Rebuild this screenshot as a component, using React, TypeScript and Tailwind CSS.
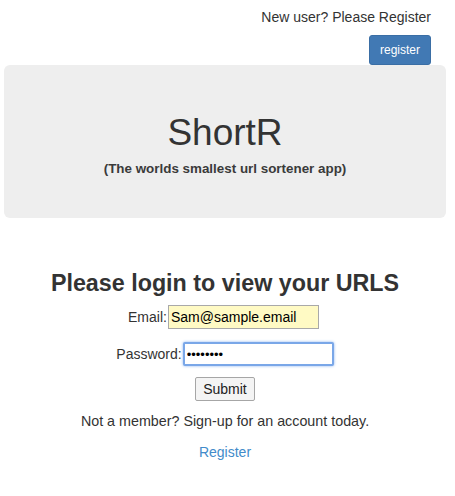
import { useState } from "react";

export default function App() {
  const [email, setEmail] = useState("Sam@sample.email");
  const [password, setPassword] = useState("password");

  return (
    <div className="w-[455px] h-[496px] bg-white text-[#333333] font-['Liberation_Sans',Arial,sans-serif] text-[14px]">
      <div className="flex flex-col items-end pr-[24px] pt-[9px]">
        <p className="leading-[16px]">New user? Please Register</p>
        <button className="mt-[10px] h-[30px] w-[62px] rounded-[3px] bg-[#4179b4] border border-[#3a6ea5] text-white text-[12px]">
          register
        </button>
      </div>

      <div className="ml-[4px] w-[442px] h-[153px] rounded-[6px] bg-[#eeeeee] flex flex-col items-center pt-[47px]">
        <h1 className="text-[37px] leading-[42px]">ShortR</h1>
        <p className="mt-[7px] text-[13.4px] font-bold leading-[16px] text-[#3a3a3a]">(The worlds smallest url sortener app)</p>
      </div>

      <div className="w-[450px] flex flex-col items-center pt-[51px]">
        <h2 className="text-[23.3px] font-bold leading-[28px]">Please login to view your URLS</h2>
        <form className="flex flex-col items-center mt-[8px]" onSubmit={(e) => e.preventDefault()}>
          <div className="flex items-center h-[24px] ml-[-3px]">
            <label className="text-[14px] pr-[1px]">Email:</label>
            <input
              value={email}
              onChange={(e) => setEmail(e.target.value)}
              className="w-[151px] h-[24px] px-[2px] text-[14px] bg-[#fffac4] border border-[#a9a9a9] outline-none text-black"
            />
          </div>
          <div className="flex items-center h-[24px] mt-[13px]">
            <label className="text-[14px] pr-[1px]">Password:</label>
            <input
              type="password"
              value={password}
              onChange={(e) => setPassword(e.target.value)}
              className="w-[151px] h-[24px] px-[2px] text-[13px] bg-white border-2 border-[#7aa7e8] rounded-[2px] shadow-[0_0_3px_#8ab4f0] outline-none text-black"
            />
          </div>
          <button className="mt-[11px] h-[24px] w-[60px] text-[14px] bg-[#f4f4f4] border border-[#a6a6a6] rounded-[2px] text-[#222]">
            Submit
          </button>
        </form>
        <p className="mt-[12px] leading-[16px] text-[14.3px]">Not a member? Sign-up for an account today.</p>
        <a href="#" className="mt-[15px] text-[#428bca] leading-[16px]">Register</a>
      </div>
    </div>
  );
}
